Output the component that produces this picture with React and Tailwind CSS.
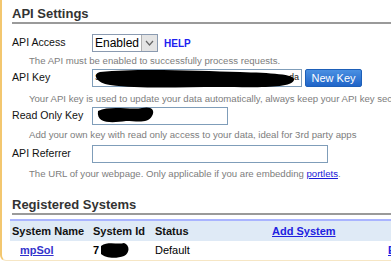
export default function App() {
  const help = 'whitespace-nowrap pl-[17px] text-[9.6px] leading-[12px] text-[#7d7d7d]'
  const label = 'w-[80px] shrink-0 text-[10.6px] text-[#111]'
  return (
    <div className="relative h-[266px] w-[391px] overflow-hidden bg-white" style={{ fontFamily: '"Liberation Sans", Arial, sans-serif' }}>
      <div className="h-[261px] w-[420px] rounded-bl-[6px] border-b border-l-2 border-[#f3c76f] border-b-[#f6e6c4] pl-[10px]">
        <div className="pt-[6px]">
          <h2 className="border-b-2 border-[#9a9a9a] text-[13px] font-bold leading-[16px] text-[#333]">API Settings</h2>
        </div>

        <div className="mt-[10px] flex h-[18px] items-center">
          <span className={label}>API Access</span>
          <div className="flex h-[18px] w-[66px] items-stretch border border-[#8a9ab0] bg-white">
            <span className="flex-1 pl-[2px] text-[12px] leading-[16px] text-black">Enabled</span>
            <span className="flex w-[16px] items-center justify-center border-l border-[#b0b0b0] bg-[#e4e4e4]">
              <svg width="9" height="6" viewBox="0 0 9 6"><path d="M1 1l3.5 4L8 1" fill="none" stroke="#666" strokeWidth="1.2" /></svg>
            </span>
          </div>
          <span className="ml-[6px] text-[10px] font-bold text-[#2020f0]">HELP</span>
        </div>
        <div className={`${help} pt-[3px]`}>The API must be enabled to successfully process requests.</div>

        <div className="mt-[2px] flex h-[18px] items-center">
          <span className={label}>API Key</span>
          <div className="flex h-[18px] w-[210px] items-center justify-between border border-[#7f9db9] px-[2px] text-[9px] text-[#222]">
            <span>Se</span>
            <span>da</span>
          </div>
          <button className="ml-[3px] h-[18px] w-[57px] rounded-[2px] border border-[#1d5fb8] bg-gradient-to-b from-[#4a90e2] to-[#1f64c8] text-[11px] leading-[14px] text-white">New Key</button>
        </div>
        <div className={`${help} pt-[6px]`}>Your API key is used to update your data automatically, always keep your API key secret</div>

        <div className="mt-[2px] flex h-[18px] items-center">
          <span className={label}>Read Only Key</span>
          <div className="h-[18px] w-[136px] border border-[#7f9db9]" />
        </div>
        <div className={`${help} pt-[4px]`}>Add your own key with read only access to your data, ideal for 3rd party apps</div>

        <div className="mt-[4px] flex h-[18px] items-center">
          <span className={label}>API Referrer</span>
          <div className="h-[18px] w-[236px] border border-[#7f9db9]" />
        </div>
        <div className={`${help} pt-[5px]`}>
          The URL of your webpage. Only applicable if you are embedding <a className="text-[#1a1ad8] underline">portlets</a>.
        </div>

        <div className="pt-[16px]">
          <h2 className="border-b-2 border-[#9a9a9a] text-[13px] font-bold leading-[17px] text-[#333]">Registered Systems</h2>
        </div>

        <div className="mt-[4px] -ml-[2px] border-t-2 border-[#a9b4ff]">
          <div className="flex h-[20px] items-center whitespace-nowrap bg-[#dfeaf6] text-[11px] font-bold text-[#111]">
            <span className="w-[83px] pl-[2px]">System Name</span>
            <span className="w-[62px]">System Id</span>
            <span className="w-[117px]">Status</span>
            <span className="w-[120px] text-[#2222e0] underline">Add System</span>
          </div>
          <div className="flex h-[18px] items-center whitespace-nowrap text-[11px]">
            <span className="w-[83px] pl-[10px] font-bold text-[#3333cc] underline">mpSol</span>
            <span className="w-[62px] font-bold text-black">7</span>
            <span className="w-[233px] text-black">Default</span>
            <span className="font-bold text-[#2222e0] underline">E</span>
          </div>
        </div>
      </div>

      <svg className="pointer-events-none absolute left-0 top-0" width="391" height="266">
        <path d="M100 72 C140 68 200 71 240 72 C270 73 296 74 294 80 C292 89 250 87 220 87 C180 87 140 89 110 85 C96 83 92 74 100 72Z" fill="#000" />
        <path d="M98 111 C110 105 130 110 142 108 C150 106 156 109 152 116 C148 124 136 121 126 121 C112 123 96 124 98 111Z" fill="#000" />
        <path d="M101 246 C108 241 118 245 124 243 C130 245 130 253 124 256 C116 259 105 258 101 254Z" fill="#000" />
      </svg>
    </div>
  )
}
